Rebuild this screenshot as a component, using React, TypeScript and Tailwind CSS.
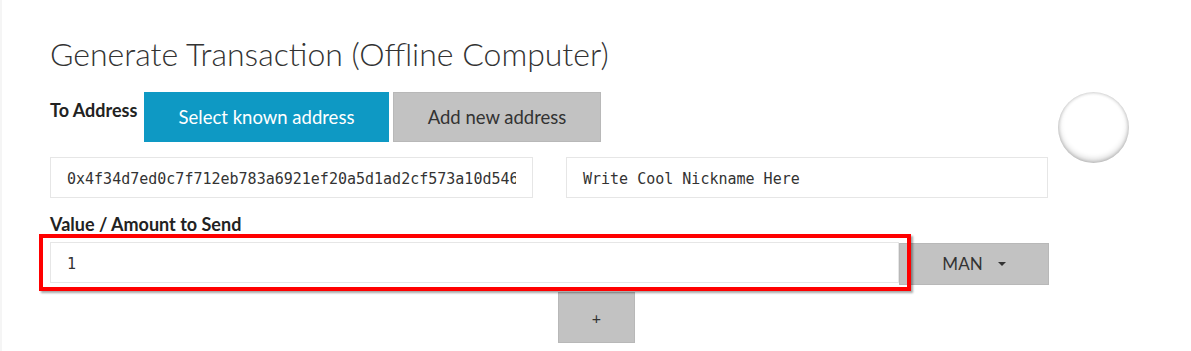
import React from "react";

export default function App() {
  return (
    <div className="relative h-[351px] w-[1191px] overflow-hidden border-l-2 border-[#f5f5f5] bg-white pl-[48px] font-['Lato','Noto_Sans',sans-serif] text-[#333]">
      <h1 className="pt-[36px] text-[32px] font-light leading-[36px] text-[#333]">
        Generate Transaction (Offline Computer)
      </h1>
      <div className="mt-[20px] flex items-start">
        <div className="w-[999px]">
          <div className="flex items-start">
            <div className="mt-[8px] w-[94px] text-[18px] font-bold leading-[20px] text-[#222]">
              To Address
            </div>
            <button className="h-[50px] w-[245px] bg-[#0e99c4] text-[18.5px] leading-[20px] text-white">
              Select known address
            </button>
            <button className="ml-[4px] h-[50px] w-[208px] border border-[#b8b8b8] bg-[#c2c2c2] text-[18.5px] leading-[20px] text-[#333]">
              Add new address
            </button>
          </div>
          <div className="mt-[15px] flex gap-[33px]">
            <div className="flex h-[41px] w-[483px] items-center border border-[#e6e6e6] px-[16px] pt-[3px] font-['DejaVu_Sans_Mono',monospace] text-[15px] text-[#333]">
              <span className="block overflow-hidden whitespace-nowrap">
                0x4f34d7ed0c7f712eb783a6921ef20a5d1ad2cf573a10d546
              </span>
            </div>
            <div className="flex h-[41px] w-[482px] items-center border border-[#e6e6e6] px-[16px] pt-[3px] font-['DejaVu_Sans_Mono',monospace] text-[15px] text-[#333]">
              Write Cool Nickname Here
            </div>
          </div>
          <div className="mt-[16px] text-[18px] font-bold leading-[20px] text-[#222]">
            Value / Amount to Send
          </div>
          <div className="relative mt-[8px] flex items-start">
            <div className="flex h-[41px] w-[849px] items-center border border-[#e6e6e6] pl-[16px] pt-[3px] font-['DejaVu_Sans_Mono',monospace] text-[15px] text-[#333]">
              1
            </div>
            <div className="mt-[1px] flex h-[42px] w-[150px] items-center justify-center gap-[15px] border border-[#b8b8b8] bg-[#c2c2c2] text-[17px] text-[#333]">
              <span>MAN</span>
              <span className="h-0 w-0 border-x-[4px] border-t-[4px] border-x-transparent border-t-[#333]" />
            </div>
            <div className="pointer-events-none absolute left-[-11px] top-[-8px] h-[57px] w-[872px] border-4 border-[#ff0000] shadow-[2px_2px_2px_rgba(0,0,0,0.35)]" />
          </div>
          <div className="ml-[508px] mt-[7px] flex h-[51px] w-[77px] items-center justify-center border border-[#b8b8b8] bg-[#c2c2c2] text-[16px] text-[#333]">
            +
          </div>
        </div>
        <div className="ml-[9px] h-[71px] w-[71px] rounded-full bg-white shadow-[inset_0_-3px_6px_rgba(0,0,0,0.2),inset_0_0_3px_1px_rgba(0,0,0,0.15)]" />
      </div>
    </div>
  );
}
